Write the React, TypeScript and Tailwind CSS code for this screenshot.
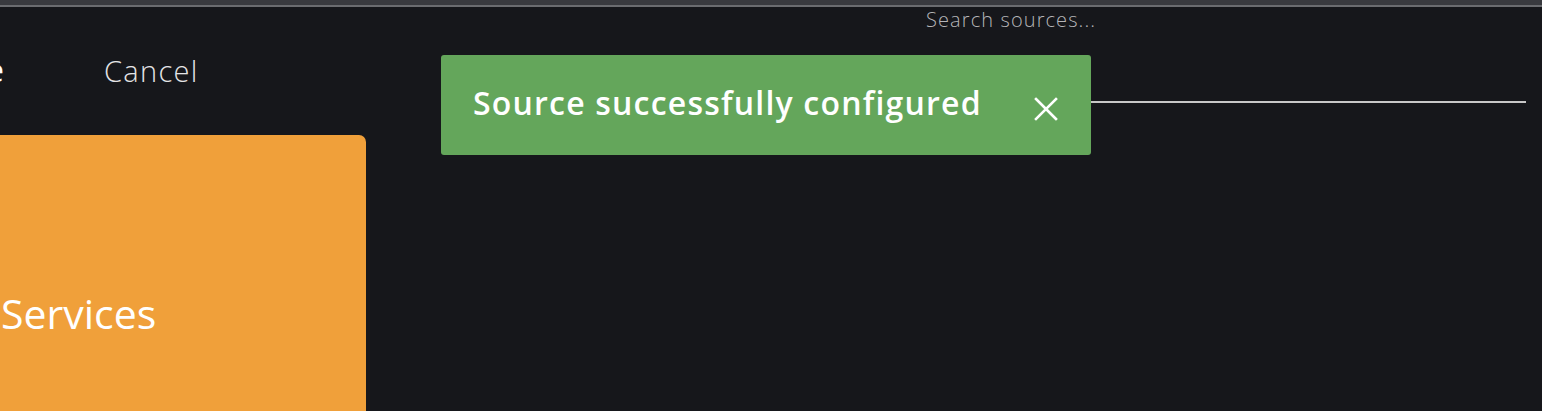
import React from "react";

export default function App() {
  return (
    <div className="relative w-[1542px] h-[411px] overflow-hidden bg-[#16171b]" style={{ fontFamily: "'Open Sans', sans-serif" }}>
      <div className="h-[7px] bg-[#393a3f] border-b-2 border-[#6b6c70]" />
      <div className="flex">
        <div className="w-[366px] shrink-0 flex flex-col">
          <div className="h-[128px] flex items-baseline pt-[46px]">
            <span className="ml-[-70px] w-[74px] text-right text-[32px] text-white font-normal leading-[34px]">Save</span>
            <span className="ml-[100px] text-[29px] font-light tracking-[1.3px] text-[#e4e4e6] leading-[34px]">Cancel</span>
          </div>
          <div className="h-[300px] bg-[#f0a03a] rounded-tr-[7px] pt-[154px] pl-[1px]">
            <span className="text-[41px] text-white leading-[48px] font-medium">Services</span>
          </div>
        </div>
        <div className="ml-[560px] w-[600px] pt-[1px]">
          <div className="h-[95px] border-b-2 border-[#c8c8c8]">
            <span className="text-[20px] text-[#b5b5b8] font-light tracking-[1.1px] leading-[24px]">Search sources...</span>
          </div>
        </div>
      </div>
      <div className="absolute left-[441px] top-[55px] w-[650px] h-[100px] bg-[#64a65b] rounded-[3px] flex items-center pl-[32px] pr-[32px]">
        <span className="text-[32px] font-semibold tracking-[1.2px] text-white leading-[36px] pb-[5px]">Source successfully configured</span>
        <svg className="ml-auto mt-[8px]" width="26" height="26" viewBox="0 0 26 26" fill="none" stroke="white" strokeWidth="2.6" strokeLinecap="square">
          <path d="M3 3 L23 23 M23 3 L3 23" />
        </svg>
      </div>
    </div>
  );
}
